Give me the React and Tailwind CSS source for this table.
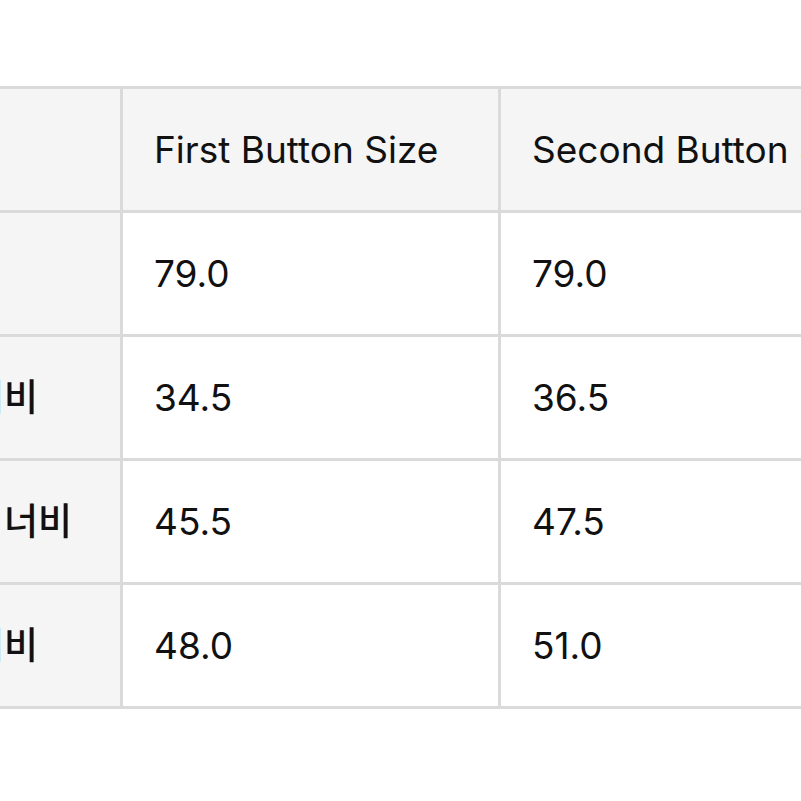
import React from "react";

const rows = [
  { label: "총장", a: "79.0", b: "79.0" },
  { label: "어깨 너비", a: "34.5", b: "36.5" },
  { label: "허벅지 너비", a: "45.5", b: "47.5" },
  { label: "밑단 너비", a: "48.0", b: "51.0" },
];

const font = { fontFamily: 'Inter, "Noto Sans CJK KR", sans-serif' };

const App = () => {
  return (
    <div className="w-[801px] h-[801px] bg-white overflow-hidden pt-[86px]" style={font}>
      <div className="ml-[-140px] w-fit grid grid-cols-[260px_375px_375px] gap-[3px] bg-[#dadada] border-y-[3px] border-[#dadada] text-[37px] text-[#111]">
        <div className="h-[121px] bg-[#f5f5f5]"></div>
        <div className="h-[121px] bg-[#f5f5f5] flex items-center pl-[31px] whitespace-nowrap">
          First Button Size
        </div>
        <div className="h-[121px] bg-[#f5f5f5] flex items-center pl-[31px] whitespace-nowrap">
          Second Button Size
        </div>
        {rows.map((r) => (
          <React.Fragment key={r.label}>
            <div className="h-[121px] bg-[#f5f5f5] flex items-center pl-[32px] whitespace-nowrap font-medium">
              {r.label}
            </div>
            <div className="h-[121px] bg-white flex items-center pl-[31px]">{r.a}</div>
            <div className="h-[121px] bg-white flex items-center pl-[31px]">{r.b}</div>
          </React.Fragment>
        ))}
      </div>
    </div>
  );
};

export default App;
